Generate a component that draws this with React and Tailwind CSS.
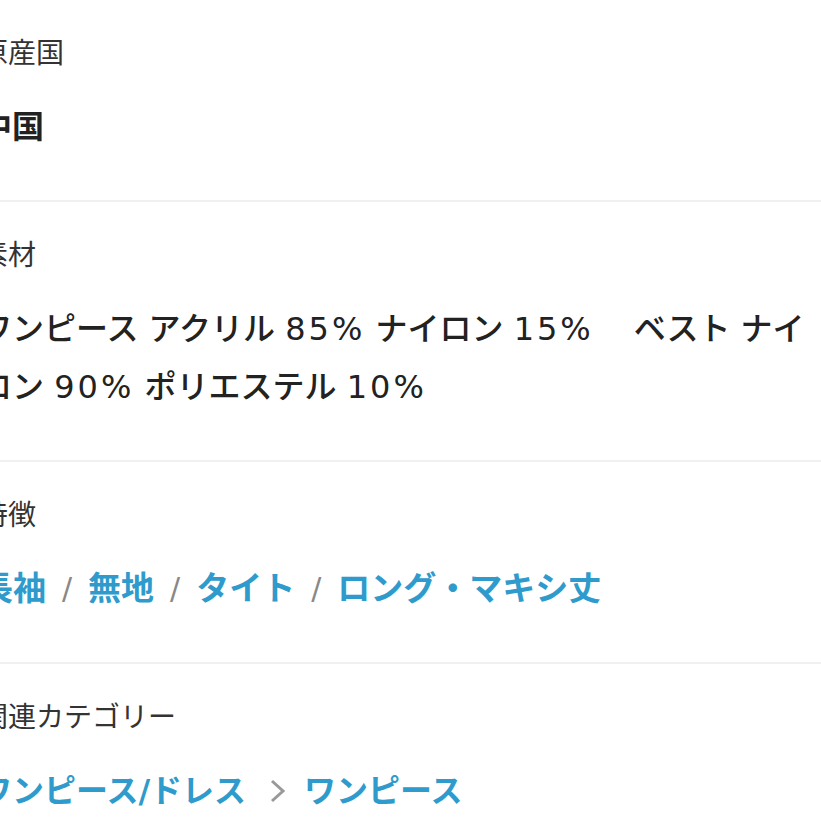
import React from "react";

const font = {
  fontFamily: '"DejaVu Sans", "Noto Sans CJK JP", sans-serif',
};

const features = ["長袖", "無地", "タイト", "ロング・マキシ丈"];

function L({ children }) {
  return <span className="tracking-[3px]">{children}</span>;
}

function Section({ label, children, last }) {
  return (
    <div className={`pt-[34px] ${last ? "pb-0" : "pb-[44px] border-b-2 border-[#f0f0f0]"}`}>
      <div className="text-[28px] leading-[40px] text-[#333]">{label}</div>
      <div className="mt-[24px]">{children}</div>
    </div>
  );
}

export default function App() {
  return (
    <div className="w-[821px] h-[821px] overflow-hidden bg-white" style={font}>
      <div className="ml-[-20px] w-[852px]">
        <Section label="原産国">
          <div className="text-[32px] leading-[58px] font-bold text-[#222]">中国</div>
        </Section>

        <Section label="素材">
          <div className="text-[32px] leading-[58px] font-medium text-[#222] break-all pr-[10px]">
            ワンピース アクリル <L>85%</L> ナイロン <L>15%</L>
            <span className="tracking-[8px]">　</span>ベスト ナイロン <L>90%</L> ポリエステル <L>10%</L>
          </div>
        </Section>

        <Section label="特徴">
          <div className="flex items-center text-[33px] leading-[58px] font-bold">
            {features.map((f, i) => (
              <React.Fragment key={f}>
                {i > 0 && (
                  <span className="mx-[16px] font-normal text-[#888] text-[30px]">/</span>
                )}
                <span className="text-[#2f9bcc]">{f}</span>
              </React.Fragment>
            ))}
          </div>
        </Section>

        <Section label="関連カテゴリー" last>
          <div className="flex items-center text-[32px] leading-[58px] font-bold text-[#2f9bcc]">
            <span>ワンピース/ドレス</span>
            <svg width="20" height="28" viewBox="0 0 20 28" className="ml-[22px] mr-[16px]">
              <path d="M4 4 L15 14 L4 24" fill="none" stroke="#999" strokeWidth="3" />
            </svg>
            <span>ワンピース</span>
          </div>
          <div className="mt-px h-[2px] bg-[#dcdcdc]" />
        </Section>
      </div>
    </div>
  );
}
